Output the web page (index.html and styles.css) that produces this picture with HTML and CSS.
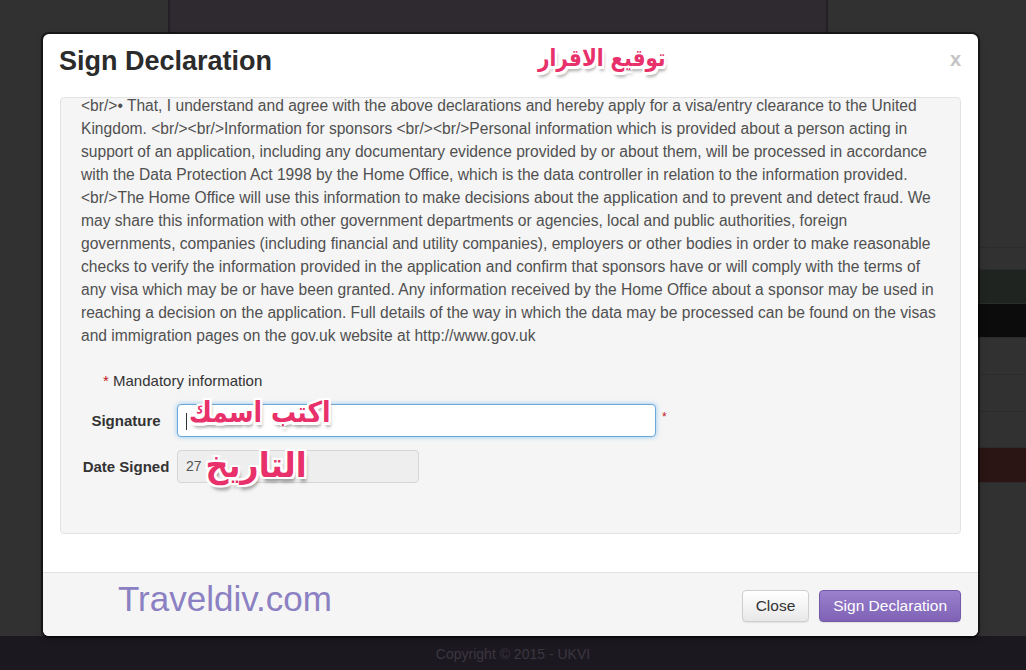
FILE: index.html
```html
<!DOCTYPE html>
<html lang="en">
<head>
  <meta charset="UTF-8" />
  <meta name="viewport" content="width=device-width, initial-scale=1.0"/>
  <title>Sign Declaration</title>
  <link rel="stylesheet" href="styles.css">
</head>
<body>
  <!-- page behind the dialog -->
  <div class="page">
    <div class="page-gutter"></div>
    <div class="page-main">
      <div class="page-banner"></div>
    </div>
    <div class="page-side">
      <div class="side-row" style="height: 248px"></div>
      <div class="side-row" style="height: 22px"></div>
      <div class="side-row side-green" style="height: 34px"></div>
      <div class="side-row side-black" style="height: 34px"></div>
      <div class="side-row" style="height: 37px"></div>
      <div class="side-row" style="height: 37px"></div>
      <div class="side-row" style="height: 36px"></div>
      <div class="side-row side-red" style="height: 35px"></div>
    </div>
  </div>
  <footer class="page-footer">Copyright © 2015 - UKVI</footer>

  <div class="modal">
    <div class="modal-header">
      <h3>Sign Declaration</h3>
      <span class="note note-title" lang="ar" dir="rtl">توقيع الاقرار</span>
      <button class="modal-close">x</button>
    </div>

    <div class="modal-body">
      <div class="well">
        <p class="declaration">
          &lt;br/&gt;• That, I understand and agree with the above declarations and hereby apply for a visa/entry clearance to the United<br>
          Kingdom. &lt;br/&gt;&lt;br/&gt;Information for sponsors &lt;br/&gt;&lt;br/&gt;Personal information which is provided about a person acting in<br>
          support of an application, including any documentary evidence provided by or about them, will be processed in accordance<br>
          with the Data Protection Act 1998 by the Home Office, which is the data controller in relation to the information provided.<br>
          &lt;br/&gt;The Home Office will use this information to make decisions about the application and to prevent and detect fraud. We<br>
          may share this information with other government departments or agencies, local and public authorities, foreign<br>
          governments, companies (including financial and utility companies), employers or other bodies in order to make reasonable<br>
          checks to verify the information provided in the application and confirm that sponsors have or will comply with the terms of<br>
          any visa which may be or have been granted. Any information received by the Home Office about a sponsor may be used in<br>
          reaching a decision on the application. Full details of the way in which the data may be processed can be found on the visas<br>
          and immigration pages on the gov.uk website at http://www.gov.uk
        </p>

        <p class="mandatory"><span class="req">*</span> Mandatory information</p>

        <div class="form-row">
          <label class="form-label">Signature</label>
          <div class="field">
            <div class="input input-focus"><span class="caret"></span></div>
            <span class="note note-name" lang="ar" dir="rtl">اكتب اسمك</span>
          </div>
          <span class="req req-field">*</span>
        </div>

        <div class="form-row form-row-tight">
          <label class="form-label">Date Signed</label>
          <div class="field">
            <div class="input input-disabled">27</div>
            <span class="note note-date" lang="ar" dir="rtl">التاريخ</span>
          </div>
        </div>
      </div>
    </div>

    <div class="modal-footer">
      <span class="brand">Traveldiv.com</span>
      <div class="actions">
        <button class="btn">Close</button>
        <button class="btn btn-primary">Sign Declaration</button>
      </div>
    </div>
  </div>
</body>
</html>
```

FILE: styles.css
```css
body {
  margin: 0;
  font-family: "Liberation Sans", Arial, sans-serif;
  background-color: #313131;
  height: 670px;
  overflow: hidden;
}

.page {
  display: flex;
  height: 636px;
}

.page-gutter {
  width: 168px;
}

.page-main {
  width: 660px;
}

.page-banner {
  height: 33px;
  background: #2e2a30;
  border-left: 2px solid #241f26;
  border-right: 2px solid #241f26;
}

.page-side {
  flex: 1;
}

.side-row {
  border-bottom: 1px solid #2b2b2b;
  box-sizing: border-box;
}

.side-green {
  background: #1f2420;
}

.side-black {
  background: #0c0c0c;
}

.side-red {
  background: #2a1414;
}

.page-footer {
  height: 34px;
  background: #1c1820;
  color: #3b3640;
  font-size: 14px;
  text-align: center;
  line-height: 36px;
}

/* dialog */
.modal {
  position: absolute;
  left: 43px;
  top: 34px;
  width: 935px;
  height: 602px;
  background: white;
  border-radius: 6px;
  box-shadow: 0 0 0 2px rgba(0,0,0,0.5), 0 3px 7px rgba(0,0,0,0.3);
  display: flex;
  flex-direction: column;
  overflow: hidden;
}

.modal-header {
  position: relative;
  height: 62px;
  display: flex;
  align-items: center;
  padding: 0 16px;
}

.modal-header h3 {
  margin: 0;
  font-size: 27px;
  color: #2b2b2b;
  font-weight: bold;
  margin-top: -8px;
}

.note {
  position: absolute;
  font-family: "DejaVu Sans", sans-serif;
  font-weight: bold;
  color: #e8306a;
  white-space: nowrap;
  text-shadow:
    -2px -2px 0 #fff, 2px -2px 0 #fff, -2px 2px 0 #fff, 2px 2px 0 #fff,
    0 -2px 0 #fff, 0 2px 0 #fff, -2px 0 0 #fff, 2px 0 0 #fff,
    2px 4px 3px rgba(0,0,0,0.35);
}

.note-title {
  left: 495px;
  top: 12px;
  font-size: 20px;
  transform: scaleY(1.2);
}

.modal-close {
  position: absolute;
  right: 17px;
  top: 14px;
  border: none;
  background: none;
  padding: 0;
  font-family: "Liberation Sans", Arial, sans-serif;
  font-size: 20px;
  font-weight: bold;
  color: #c4c4c4;
}

.modal-body {
  flex: 1;
  padding: 0 17px;
}

.well {
  background: #f5f5f5;
  border: 1px solid #e3e3e3;
  border-radius: 4px;
  height: 437px;
  margin-top: 1px;
  box-sizing: border-box;
  padding: 0 20px;
  color: #505050;
  font-size: 15.6px;
}

.declaration {
  margin: -4px 0 0;
  line-height: 23px;
  white-space: nowrap;
}

.mandatory {
  margin: 25px 0 0 22px;
  font-size: 15px;
  color: #333;
}

.req {
  color: #c21a1a;
}

.form-row {
  display: flex;
  align-items: center;
  margin-top: 15px;
}

.form-row-tight {
  margin-top: 13px;
}

.form-label {
  width: 90px;
  text-align: center;
  font-size: 15px;
  font-weight: bold;
  color: #333;
  margin-right: 6px;
}

.field {
  position: relative;
}

.input {
  height: 33px;
  box-sizing: border-box;
  border-radius: 4px;
  font-size: 14px;
  padding: 0 8px;
  line-height: 31px;
  color: #555;
}

.input-focus {
  width: 479px;
  background: white;
  border: 1px solid #6aa6d8;
  box-shadow: 0 0 5px rgba(82,168,236,0.6);
}

.caret {
  display: inline-block;
  width: 1px;
  height: 17px;
  background: #333;
  vertical-align: middle;
}

.input-disabled {
  width: 242px;
  background: #eeeeee;
  border: 1px solid #d6d6d6;
}

.req-field {
  margin-left: 6px;
  margin-top: -8px;
  font-size: 12px;
}

.note-name {
  left: 12px;
  top: -6px;
  font-size: 25px;
  transform: scaleY(1.15);
}

.note-date {
  left: 33px;
  top: -2px;
  font-size: 29px;
  transform: scale(1.1, 1.2);
}

.modal-footer {
  height: 64px;
  box-sizing: border-box;
  background: #f5f5f5;
  border-top: 1px solid #e2e2e2;
  display: flex;
  align-items: center;
  justify-content: space-between;
  padding: 0 17px 0 75px;
}

.brand {
  font-size: 35px;
  color: #8b80c2;
  margin-top: -12px;
}

.actions {
  display: flex;
  gap: 10px;
  margin-top: 2px;
}

.btn {
  height: 32px;
  padding: 0 13px;
  font-family: "Liberation Sans", Arial, sans-serif;
  font-size: 15.5px;
  color: #333;
  background: linear-gradient(#ffffff, #e8e8e8);
  border: 1px solid #cfcfcf;
  border-radius: 4px;
  box-shadow: 0 1px 1px rgba(0,0,0,0.08);
}

.btn-primary {
  color: white;
  background: linear-gradient(#9a80cd, #7f62b5);
  border-color: #7459a8;
}
```
